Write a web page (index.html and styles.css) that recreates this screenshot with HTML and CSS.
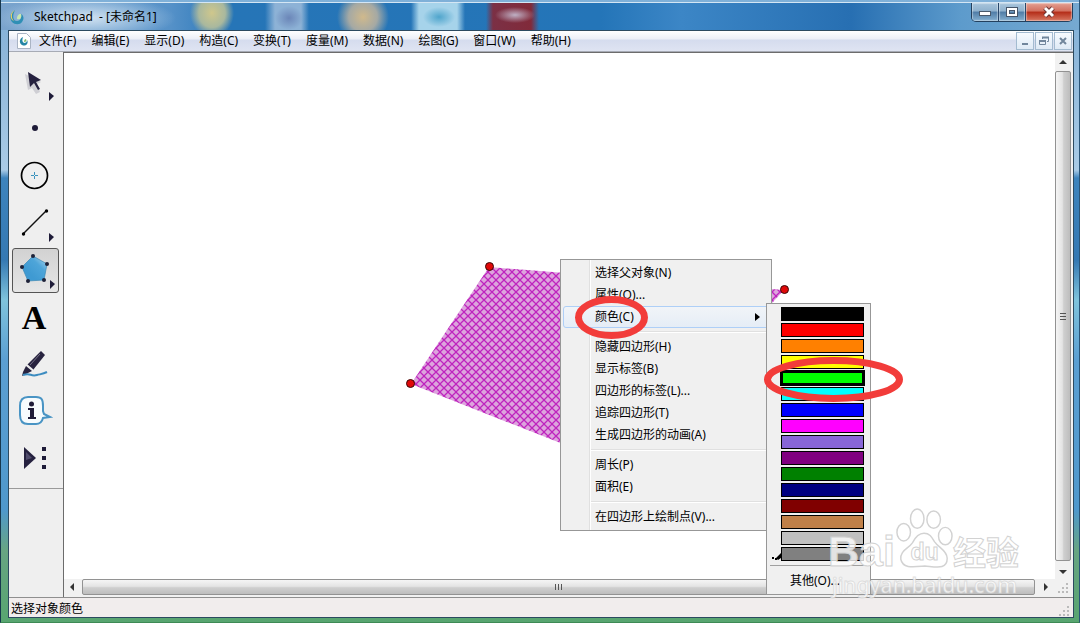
FILE: index.html
```html
<!DOCTYPE html>
<html lang="zh-CN">
<head>
    <meta charset="UTF-8">
    <meta name="viewport" content="width=device-width, initial-scale=1.0">
    <title>Sketchpad - [未命名1]</title>
    <link rel="stylesheet" href="styles.css">
</head>
<body>
    <div class="window">
        <header class="titlebar">
            <svg class="app-icon" width="16" height="16" viewBox="0 0 16 16">
                <path d="M6 1C1 4 0 9 3 13c3 3 8 3 10 0 3-4 1-7-1-8 1 4-1 7-4 7-4 0-5-5-2-11z" fill="#2f8fb5"/>
                <path d="M6 1c-4 3-4 8-1 11-4-1-5-8 1-11z" fill="#f2d45c"/>
                <path d="M12 5c1 4-1 6-4 5 0-3 1-5 4-5z" fill="#c9e8b0"/>
            </svg>
            <h1>Sketchpad&nbsp; - [未命名1]</h1>
            <div class="window-buttons">
                <button class="glass" aria-label="最小化">
                    <svg width="14" height="12" viewBox="0 0 14 12"><rect x="1.500" y="5.500" width="11" height="4" fill="#fff" stroke="#4a5a6c"/></svg>
                </button>
                <button class="glass" aria-label="最大化">
                    <svg width="14" height="12" viewBox="0 0 14 12"><rect x="3" y="3" width="8" height="6" fill="none" stroke="#46566a" stroke-width="4"/><rect x="3" y="3" width="8" height="6" fill="none" stroke="#fff" stroke-width="2"/></svg>
                </button>
                <button class="glass glass-close" aria-label="关闭">
                    <svg width="14" height="12" viewBox="0 0 14 12"><path d="M3 2l8 8M11 2l-8 8" stroke="#6b3434" stroke-width="5"/><path d="M3 2l8 8M11 2l-8 8" stroke="#fff" stroke-width="3"/></svg>
                </button>
            </div>
        </header>

        <main class="client">
            <nav class="menubar">
                <svg class="doc-icon" width="14" height="16" viewBox="0 0 14 16">
                    <path d="M.5.5h9l4 4v11H.5z" fill="#fff" stroke="#aab4c4"/>
                    <path d="M6 4c-4 2-4 6-1 8 4 2 7-2 5-5 0 2-1 3-3 3-2-1-2-3-1-6z" fill="#2486a6"/>
                    <path d="M9 6c1 2 0 3-2 3 0-2 1-3 2-3z" fill="#7fbd6a"/>
                </svg>
                <div class="menus">
                    <button>文件(F)</button>
                    <button>编辑(E)</button>
                    <button>显示(D)</button>
                    <button>构造(C)</button>
                    <button>变换(T)</button>
                    <button>度量(M)</button>
                    <button>数据(N)</button>
                    <button>绘图(G)</button>
                    <button>窗口(W)</button>
                    <button>帮助(H)</button>
                </div>
                <div class="doc-buttons">
                    <button aria-label="最小化文档"><svg width="12" height="12" viewBox="0 0 12 12"><path d="M3 9h6" stroke="#71869c" stroke-width="2"/></svg></button>
                    <button aria-label="还原文档"><svg width="12" height="12" viewBox="0 0 12 12" fill="none" stroke="#71869c"><path d="M4.500 4V2.500h6v4H9"/><path d="M4 2.500h7M1 6h7" stroke-width="2"/><path d="M1.500 5.500h6v4h-6z"/></svg></button>
                    <button aria-label="关闭文档"><svg width="12" height="12" viewBox="0 0 12 12"><path d="M3 3l6 6M9 3l-6 6" stroke="#71869c" stroke-width="2"/></svg></button>
                </div>
            </nav>

            <div class="workspace">
                <aside class="side">
                    <div class="toolbox">
                        <button class="tool" aria-label="选择">
                            <svg width="45" height="43" viewBox="0 0 45 43">
                                <path d="M12 13l3 16 4-2 4 6 4-2-3-8 4-2z" fill="#cfcfd4"/>
                                <path d="M15 11l2 15 4-4 4 7 2-1-4-7 5-2z" fill="#25213f"/>
                                <path d="M36 31l5 4-5 5z" fill="#1e1b38"/>
                            </svg>
                        </button>
                        <button class="tool" aria-label="点">
                            <svg width="45" height="43" viewBox="0 0 45 43"><circle cx="22" cy="20" r="3" fill="#1e1b38"/></svg>
                        </button>
                        <button class="tool" aria-label="圆">
                            <svg width="45" height="43" viewBox="0 0 45 43">
                                <circle cx="21.500" cy="20.500" r="13" fill="none" stroke="#000" stroke-width="1.700"/>
                                <path d="M18 20.500h3m1 0h3M21.500 17v3m0 1v3" stroke="#3b93bd"/>
                            </svg>
                        </button>
                        <button class="tool" aria-label="线段">
                            <svg width="45" height="43" viewBox="0 0 45 43">
                                <path d="M10 32L33 9" stroke="#111" stroke-width="1.500"/>
                                <circle cx="10.500" cy="32" r="1.700"/><circle cx="33.500" cy="9" r="1.700"/>
                                <path d="M36 31l5 4-5 5z" fill="#1e1b38"/>
                            </svg>
                        </button>
                        <button class="tool tool-active" aria-label="多边形">
                            <svg width="45" height="43" viewBox="0 0 45 43">
                                <defs>
                                    <linearGradient id="pentagon" x1="1" y1="0" x2="0.300" y2="0.700">
                                        <stop offset="0" stop-color="#b9def2"/>
                                        <stop offset="0.500" stop-color="#4ea5d9"/>
                                        <stop offset="1" stop-color="#3f9ad2"/>
                                    </linearGradient>
                                </defs>
                                <path d="M20 7l14 8-3 16-16 1-6-14z" fill="url(#pentagon)" stroke="#3b88b5" stroke-width="0.700"/>
                                <g fill="#1e2238"><circle cx="20" cy="7" r="2"/><circle cx="34" cy="15" r="2"/><circle cx="31" cy="31" r="2"/><circle cx="15" cy="32" r="2"/><circle cx="9" cy="18" r="2"/></g>
                                <path d="M37 31l5 4-5 5z" fill="#1e1b38"/>
                            </svg>
                        </button>
                        <button class="tool tool-text" aria-label="文本">A</button>
                        <button class="tool" aria-label="标记">
                            <svg width="45" height="43" viewBox="0 0 45 43">
                                <path d="M28 8l4 4-12 15-6-5z" fill="#28233f"/>
                                <path d="M27 11l-10 11" stroke="#777389"/>
                                <path d="M13 23l6 5-4 2-6 3 1-4z" fill="#28233f"/>
                                <path d="M13 21l7 6" stroke="#eee" stroke-width="1.500"/>
                                <path d="M10 32c8-3 7 2 14 0 4-1 6-1 10-3" fill="none" stroke="#3c8cc0" stroke-width="2"/>
                            </svg>
                        </button>
                        <button class="tool" aria-label="信息">
                            <svg width="45" height="43" viewBox="0 0 45 43">
                                <path d="M15 7h8c6 0 7 3 7 9v5l1 3 6 3-7 1c-1 4-3 6-7 6h-8c-5 0-8-3-8-9v-9c0-6 3-9 8-9z" fill="#f7fbfd" stroke="#4994c4" stroke-width="2"/>
                                <circle cx="18.500" cy="14" r="2.500" fill="#1e1b38"/>
                                <path d="M15 18h6v9h2v2h-8v-2h2v-7h-2z" fill="#1e1b38"/>
                            </svg>
                        </button>
                        <button class="tool" aria-label="自定义工具">
                            <svg width="45" height="43" viewBox="0 0 45 43">
                                <path d="M11 10l12 11-12 11z" fill="#25213f"/><path d="M13 15l6 6-6 2z" fill="#504c6c"/>
                                <path d="M29 10h4v4h-4zM29 19h4v4h-4zM29 28h4v4h-4z" fill="#1e1b38"/>
                            </svg>
                        </button>
                    </div>
                </aside>

                <section class="sketch">
                    <div class="canvas">
                        <svg width="990" height="526" viewBox="64 53 990 526">
                            <defs>
                                <pattern id="hatch" width="8" height="8" patternUnits="userSpaceOnUse">
                                    <rect width="8" height="8" fill="#dda4dd"/>
                                    <path d="M-1-1l10 10M9-1L-1 9" stroke="#be24be" stroke-width="1.300"/>
                                </pattern>
                            </defs>
                            <path d="M489 267L784 290L621 467L411 384z" fill="url(#hatch)"/>
                            <g fill="#e00808" stroke="#3a0808">
                                <circle cx="489.500" cy="266.500" r="4"/>
                                <circle cx="410.500" cy="383.500" r="4"/>
                                <circle cx="784.500" cy="289.500" r="4"/>
                            </g>
                        </svg>
                    </div>
                    <div class="vscroll">
                        <svg class="arrow" width="16" height="18" viewBox="0 0 16 18"><path d="M4 11l4-4 4 4z" fill="#333"/></svg>
                        <div class="thumb"><svg width="8" height="8" viewBox="0 0 8 8"><path d="M1 1.500h6M1 4.500h6M1 7.500h6" stroke="#555"/></svg></div>
                        <svg class="arrow" width="16" height="18" viewBox="0 0 16 18"><path d="M4 9l4 4 4-4z" fill="#333"/></svg>
                    </div>
                    <div class="hscroll">
                        <svg class="arrow" width="18" height="16" viewBox="0 0 18 16"><path d="M10 4L6 8l4 4z" fill="#333"/></svg>
                        <div class="thumb"><svg width="8" height="8" viewBox="0 0 8 8"><path d="M.5 1v6M3.500 1v6M6.500 1v6" stroke="#555"/></svg></div>
                        <svg class="arrow" width="20" height="16" viewBox="0 0 20 16"><path d="M9 4l4 4-4 4z" fill="#333"/></svg>
                    </div>
                    <div class="corner"><svg width="12" height="12" viewBox="0 0 12 12"><path d="M8 1h2v2H8zM4 5h2v2H4zM8 5h2v2H8zM0 9h2v2H0zM4 9h2v2H4zM8 9h2v2H8z" fill="#bbb"/></svg></div>
                </section>
            </div>

            <footer class="statusbar">
                <span>选择对象颜色</span>
                <svg width="12" height="12" viewBox="0 0 12 12"><path d="M8 1h2v2H8zM4 5h2v2H4zM8 5h2v2H8zM0 9h2v2H0zM4 9h2v2H4zM8 9h2v2H8z" fill="#bbb"/></svg>
            </footer>
        </main>

        <div class="popup context-menu">
            <button>选择父对象(N)</button>
            <button>属性(O)...</button>
            <button class="highlight">颜色(C)
                <svg width="5" height="8" viewBox="0 0 5 8"><path d="M0 0l5 4-5 4z"/></svg>
            </button>
            <hr>
            <button>隐藏四边形(H)</button>
            <button>显示标签(B)</button>
            <button>四边形的标签(L)...</button>
            <button>追踪四边形(T)</button>
            <button>生成四边形的动画(A)</button>
            <hr>
            <button>周长(P)</button>
            <button>面积(E)</button>
            <hr>
            <button>在四边形上绘制点(V)...</button>
        </div>

        <div class="popup color-menu">
            <div class="swatches">
                <button class="swatch black" aria-label="黑"></button>
                <button class="swatch red" aria-label="红"></button>
                <button class="swatch orange" aria-label="橙"></button>
                <button class="swatch yellow" aria-label="黄"></button>
                <button class="swatch lime selected" aria-label="绿"></button>
                <button class="swatch cyan" aria-label="青"></button>
                <button class="swatch blue" aria-label="蓝"></button>
                <button class="swatch magenta" aria-label="品红"></button>
                <button class="swatch violet" aria-label="淡紫"></button>
                <button class="swatch purple" aria-label="紫"></button>
                <button class="swatch green" aria-label="深绿"></button>
                <button class="swatch navy" aria-label="深蓝"></button>
                <button class="swatch maroon" aria-label="深红"></button>
                <button class="swatch brown" aria-label="棕"></button>
                <button class="swatch silver" aria-label="浅灰"></button>
                <button class="swatch gray" aria-label="灰"></button>
            </div>
            <svg class="tick" width="10" height="8" viewBox="0 0 10 8"><path d="M0 5h2v2H0zM3 6h2v2H3zM4 6l5-5v5l-3 2z"/></svg>
            <button class="other">其他(O)...</button>
        </div>

        <div class="watermark">
            <div class="brand">
                <span class="latin">Bai</span>
                <svg width="58" height="62" viewBox="0 0 60 62" fill="#fff" fill-opacity="0.700" stroke="#d2d2d2" stroke-width="1.500">
                    <ellipse cx="9" cy="25" rx="7" ry="9"/>
                    <ellipse cx="23" cy="11" rx="7" ry="10"/>
                    <ellipse cx="40" cy="12" rx="7" ry="9"/>
                    <ellipse cx="52" cy="29" rx="7" ry="9"/>
                    <path d="M30 26c6 0 8 4 11 9 4 6 13 9 13 17 0 12-11 9-23 8-12 1-23 3-25-7-1-9 8-11 12-17 3-6 6-10 12-10z"/>
                    <text class="paw-text" x="16" y="54">du</text>
                </svg>
                <span class="han">经验</span>
            </div>
            <div class="url">jingyan.baidu.com</div>
        </div>

        <svg class="marks" width="360" height="120" viewBox="560 290 360 120" fill="none" stroke="#f23c3a" stroke-width="7">
            <ellipse cx="611.500" cy="317.500" rx="33" ry="18"/>
            <ellipse cx="833.500" cy="379.500" rx="66" ry="19"/>
        </svg>
    </div>
</body>
</html>
```

FILE: styles.css
```css
* {
    box-sizing: border-box;
}
body {
    margin: 0;
    font-family: "Noto Sans", "Noto Sans CJK SC", sans-serif;
    font-size: 12px;
    line-height: 20px;
    color: #000;
}
button {
    margin: 0;
    padding: 0;
    border: none;
    background: none;
    font: inherit;
    color: inherit;
}
svg {
    display: block;
    flex: none;
}

/* window frame */
.window {
    position: relative;
    display: flex;
    flex-direction: column;
    min-height: 100vh;
    padding: 2px 5px 4px 7px;
    border-left: 1px solid #17384e;
    border-right: 1px solid #2a5578;
    border-bottom: 1px solid #3d8a55;
    background: linear-gradient(#7fb0d8 0, #8fb8da 60px, #a9cbe6 170px, #3d84bd 178px, #3579b3 260px, #7fc3dc 300px, #5b9fd2 360px, #4f98cc 510px, #67a583 550px, #58a570 100%);
}
.titlebar {
    display: flex;
    align-items: center;
    height: 28px;
    margin: 0 -5px 0 -7px;
    padding-left: 8px;
    gap: 9px;
    border-top: 1px solid #d4e6f4;
    background:
        radial-gradient(ellipse 90px 22px at 85px 15px, rgba(222, 235, 246, 0.9), rgba(190, 215, 236, 0.5) 60%, transparent),
        radial-gradient(ellipse 22px 24px at 211px 10px, #cfc78c, #a9b89e 60%, transparent),
        radial-gradient(ellipse 14px 12px at 288px 15px, #6b86b8, transparent),
        linear-gradient(90deg, transparent 264px, #8db2d6 274px, #8db2d6 300px, transparent 308px),
        radial-gradient(ellipse 26px 26px at 362px 14px, #d0b98c, #a5a9a4 55%, transparent),
        radial-gradient(ellipse 16px 10px at 438px 14px, #4fa5cc, transparent),
        linear-gradient(90deg, transparent 410px, #a6d3ea 418px, #a6d3ea 456px, transparent 464px),
        radial-gradient(ellipse 20px 8px at 514px 12px, #bfb0c4, transparent),
        linear-gradient(90deg, transparent 485px, #7b3045 492px, #812a3a 530px, transparent 538px),
        linear-gradient(90deg, #7ba4cd, #5591c8 170px, #2675b7 230px, #2475b8 600px, #3c86c6 680px, #276fb2 850px, #5d9bcc 960px, #76a9d1);
}
.titlebar h1 {
    flex: 1;
    margin: 0;
    font-size: 12px;
    font-weight: normal;
}
.window-buttons {
    display: flex;
    align-self: flex-start;
    margin-right: 6px;
    border: 1px solid #23405e;
    border-top: none;
    border-radius: 0 0 5px 5px;
    overflow: hidden;
}
.glass {
    display: flex;
    align-items: center;
    justify-content: center;
    width: 27px;
    height: 18px;
    border-right: 1px solid #28476a;
    background: linear-gradient(#a9c5dc, #8fb1cd 45%, #4f7ca6 50%, #85b0d0);
    box-shadow: inset 0 0 1px 1px rgba(255, 255, 255, 0.4);
}
.glass-close {
    width: 46px;
    border-right: none;
    background: linear-gradient(#e3a092, #d2705f 45%, #b42c18 50%, #d77862);
}

.client {
    display: flex;
    flex: 1;
    flex-direction: column;
    border: 1px solid #2c4a60;
    background: #efefef;
}
.menubar {
    display: flex;
    align-items: center;
    height: 21px;
    padding-left: 8px;
    border-bottom: 1px solid #a7abb5;
    background: linear-gradient(#fff, #eceff7 40%, #d5dcee 45%, #dfe4f2);
}
.menus {
    display: flex;
    flex: 1;
    gap: 15px;
    margin-left: 8px;
}
.doc-buttons {
    display: flex;
    gap: 1px;
    padding-right: 1px;
}
.doc-buttons button {
    display: flex;
    align-items: center;
    justify-content: center;
    width: 18px;
    height: 18px;
    border: 1px solid #a3bbd0;
    background: linear-gradient(#f7fbff, #dfeaf5);
}

/* toolbox and drawing area */
.workspace {
    display: flex;
    flex: 1;
}
.side {
    width: 55px;
    border-right: 1px solid #6c6c6c;
}
.toolbox {
    display: flex;
    flex-direction: column;
    align-items: flex-start;
    gap: 2px;
    padding: 8px 3px 7px;
    border-bottom: 1px solid #9a9a9a;
}
.tool {
    width: 47px;
    height: 45px;
    border: 1px solid transparent;
    border-radius: 3px;
}
.tool-active {
    border-color: #555;
    background: linear-gradient(#d2d2d2, #e6e6e6);
}
.tool-text {
    padding-right: 3px;
    font-family: "Liberation Serif", serif;
    font-size: 34px;
    font-weight: bold;
    line-height: 43px;
}
.sketch {
    display: grid;
    flex: 1;
    grid-template-columns: 1fr 18px;
    grid-template-rows: 1fr 18px;
    min-width: 0;
    border-top: 1px solid #6c6c6c;
}
.canvas {
    min-width: 0;
    overflow: hidden;
    background: #fff;
}
.vscroll,
.hscroll {
    display: flex;
    background: #f1f1f1;
}
.vscroll {
    flex-direction: column;
    padding-right: 2px;
}
.hscroll {
    padding-bottom: 2px;
}
.thumb {
    display: flex;
    flex: 1;
    align-items: center;
    justify-content: center;
    border: 1px solid #929292;
    border-radius: 2px;
}
.vscroll .thumb {
    background: linear-gradient(90deg, #f5f5f5, #e4e4e4 45%, #cfcfcf 55%, #bdbdbd);
}
.hscroll .thumb {
    background: linear-gradient(#f5f5f5, #e4e4e4 45%, #cfcfcf 55%, #bdbdbd);
}
.corner {
    display: flex;
    align-items: flex-end;
    justify-content: center;
    padding-bottom: 3px;
    background: #f1f1f1;
}
.statusbar {
    display: flex;
    align-items: flex-end;
    justify-content: space-between;
    height: 20px;
    padding: 0 2px;
    border-top: 1px solid #8f8f8f;
    background: #f1eded;
    line-height: 16px;
}

/* popup menus */
.popup {
    position: absolute;
    border: 1px solid #979797;
    background: #f0f0f0;
}
.context-menu {
    left: 559px;
    top: 259px;
    width: 212px;
    padding: 2px;
    background: linear-gradient(90deg, #f0f0f0 28px, #e0e0e0 28px, #e0e0e0 29px, #fff 29px, #fff 30px, #f0f0f0 30px);
}
.context-menu button {
    display: flex;
    align-items: center;
    justify-content: space-between;
    width: 100%;
    height: 22px;
    padding: 0 8px 0 31px;
    border: 1px solid transparent;
    border-radius: 3px;
}
.context-menu .highlight {
    border-color: #aecff7;
    background: linear-gradient(#f1f4f8, #e5edf6);
}
.context-menu hr {
    height: 2px;
    margin: 3px 0 3px 28px;
    border: none;
    border-top: 1px solid #e0e0e0;
    border-bottom: 1px solid #fff;
}
.color-menu {
    left: 765px;
    top: 303px;
    width: 105px;
    padding: 3px;
}
.swatches {
    display: flex;
    flex-direction: column;
    gap: 2px;
    margin: 0 3px 4px 11px;
}
.swatch {
    height: 14px;
    border: 1px solid #000;
}
.swatch.selected {
    border-width: 2px;
    outline: 1px solid #000;
}
.black { background: #000; }
.red { background: #f00; }
.orange { background: #ff8000; }
.yellow { background: #ff0; }
.lime { background: #0f0; }
.cyan { background: #0ff; }
.blue { background: #00f; }
.magenta { background: #f0f; }
.violet { background: #8866d8; }
.purple { background: #800080; }
.green { background: #008000; }
.navy { background: #000080; }
.maroon { background: #800000; }
.brown { background: #c08048; }
.silver { background: #c0c0c0; }
.gray { background: #808080; }
.tick {
    position: absolute;
    left: 5px;
    top: 248px;
}
.other {
    width: 100%;
    height: 26px;
    padding: 4px 0 0 20px;
    border-top: 1px solid #a0a0a0;
    text-align: left;
}

/* overlays */
.watermark {
    position: absolute;
    left: 827px;
    top: 507px;
    pointer-events: none;
    color: rgba(255, 255, 255, 0.8);
    font-weight: bold;
    white-space: nowrap;
}
.brand {
    display: flex;
    align-items: flex-end;
}
.brand span {
    -webkit-text-stroke: 1px #d2d2d2;
}
.latin {
    font-family: "Liberation Sans", sans-serif;
    font-size: 43px;
    line-height: 36px;
}
.han {
    font-family: "Noto Sans CJK SC", sans-serif;
    font-size: 33px;
    line-height: 36px;
}
.paw-text {
    font-family: "Liberation Sans", sans-serif;
    font-size: 24px;
    stroke-width: 1px;
}
.url {
    padding-left: 4px;
    font-size: 21px;
    font-weight: 500;
    line-height: 32px;
    -webkit-text-stroke: 1px rgba(205, 205, 205, 0.6);
}
.marks {
    position: absolute;
    left: 559px;
    top: 290px;
    pointer-events: none;
}
```
